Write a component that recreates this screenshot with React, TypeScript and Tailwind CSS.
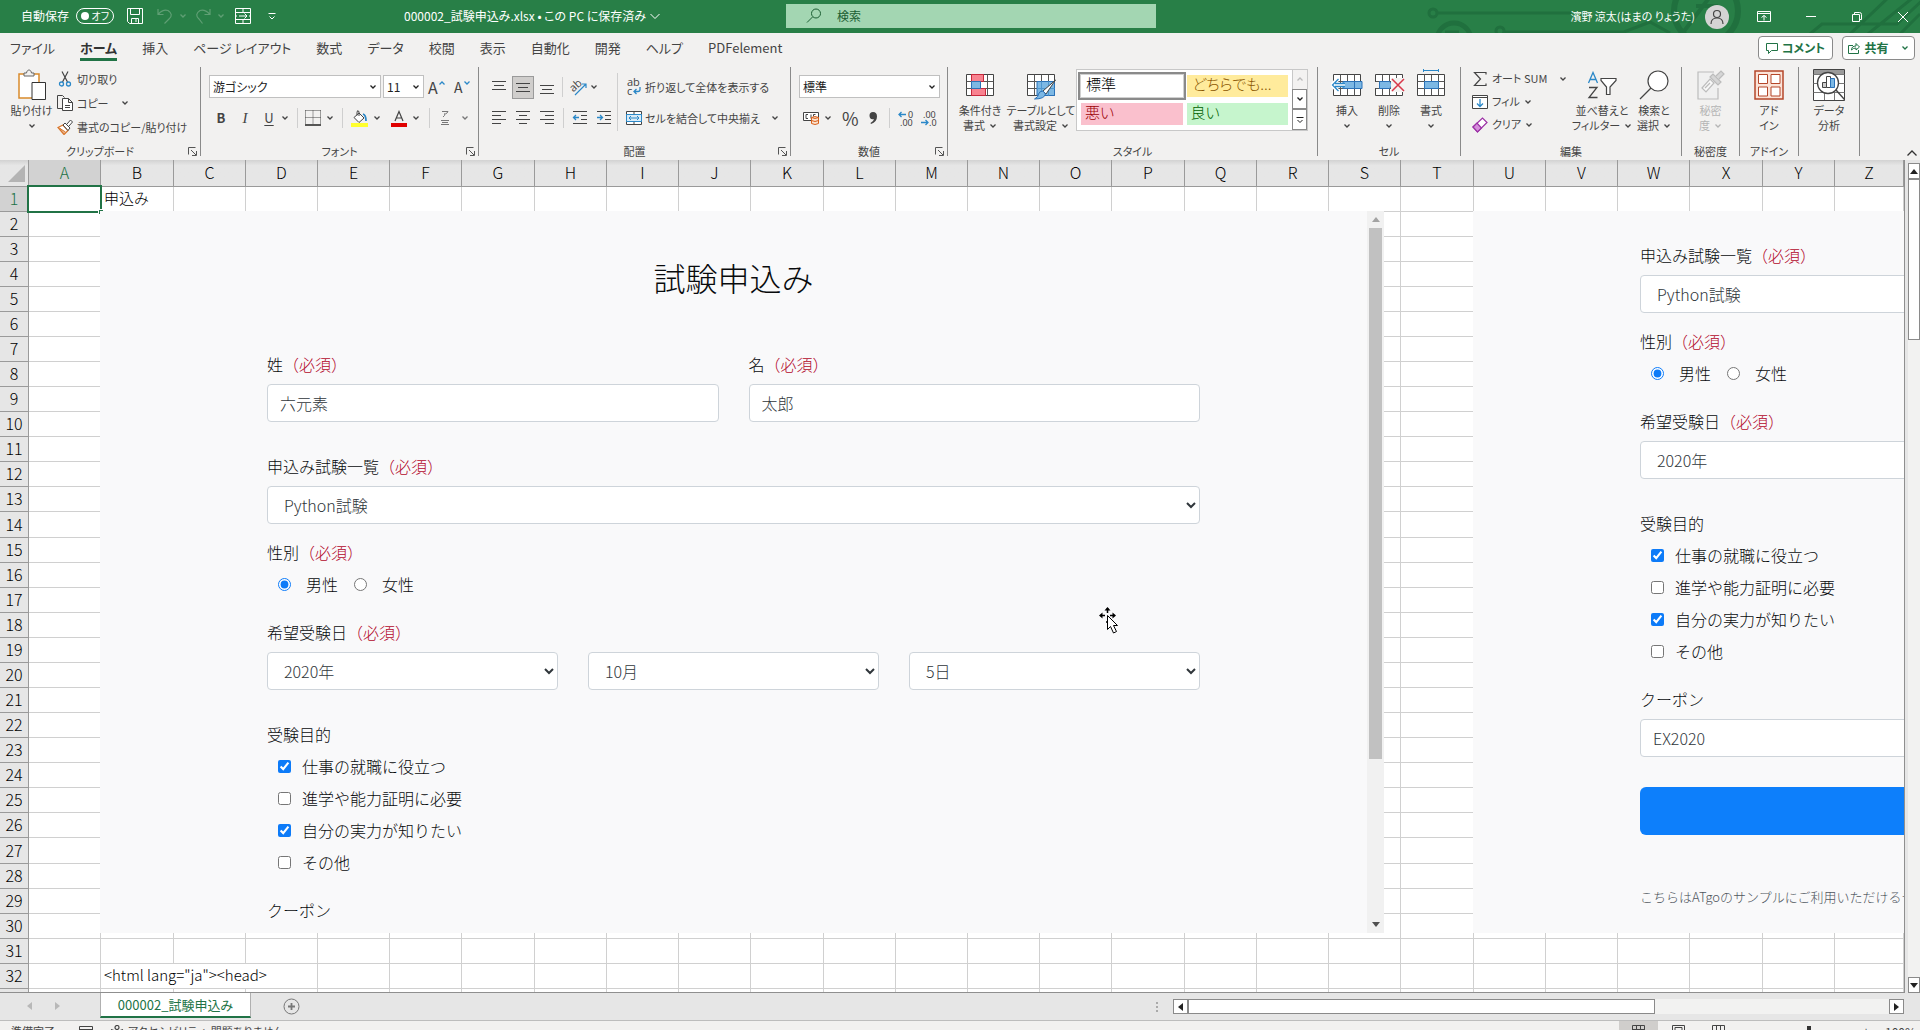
import { Fragment, useState } from "react"
import type { ReactNode } from "react"
import clsx from "clsx"

const COLUMNS = "ABCDEFGHIJKLMNOPQRSTUVWXYZ".split("")
const WIDE_COLUMNS = ["B", "G", "K", "P", "T", "X"]
const ROWS = Array.from({ length: 33 }, (_, i) => i + 1)
const TALL_ROWS = [14, 27]

const TABS = [
  "ファイル", "ホーム", "挿入", "ページ レイアウト", "数式", "データ",
  "校閲", "表示", "自動化", "開発", "ヘルプ", "PDFelement",
]

const PURPOSES = [
  { label: "仕事の就職に役立つ", checked: true },
  { label: "進学や能力証明に必要", checked: false },
  { label: "自分の実力が知りたい", checked: true },
  { label: "その他", checked: false },
]

/* ---------- small shared pieces ---------- */

function Chevron({ className = "" }: { className?: string }) {
  return (
    <svg viewBox="0 0 8 8" className={clsx("h-2 w-2 shrink-0", className)} fill="none" stroke="currentColor" strokeWidth="1.3">
      <path d="M1.5 2.5 4 5l2.5-2.5" />
    </svg>
  )
}

function Launcher() {
  return (
    <button aria-label="ダイアログを表示" className="absolute right-[3px] bottom-0">
      <svg viewBox="0 0 9 9" className="h-[9px] w-[9px]" fill="none" stroke="#555" strokeWidth="1">
        <path d="M.5 7.500V.5H7.500M3 3l5 5M8.500 4v4.500H4" />
      </svg>
    </button>
  )
}

function Group({ label, className, launcher, children }: {
  label: string
  className: string
  launcher?: boolean
  children: ReactNode
}) {
  return (
    <section className={clsx("relative flex shrink-0 flex-col border-r border-[#8a8a8a]", className)}>
      <div className="flex h-[75px] shrink-0 items-start">{children}</div>
      <div className="text-center text-[11px] leading-[18px] text-[#444]">{label}</div>
      {launcher && <Launcher />}
    </section>
  )
}

function BigButton({ icon, lines, arrow, className, disabled }: {
  icon: ReactNode
  lines: string[]
  arrow?: boolean
  className: string
  disabled?: boolean
}) {
  return (
    <button
      disabled={disabled}
      className={clsx("flex shrink-0 flex-col items-center text-[11px] leading-[15px] whitespace-nowrap", className, disabled ? "text-[#b5b5b5]" : "text-[#444]")}
    >
      <span className="grid h-9 place-items-center">{icon}</span>
      {lines.map((line, i) => (
        <span key={line} className="flex items-center gap-1">
          {line}
          {arrow && lines.length > 1 && i === lines.length - 1 && <Chevron />}
        </span>
      ))}
      {arrow && lines.length === 1 && <Chevron className="mt-1" />}
    </button>
  )
}

function Divider({ className = "h-5" }: { className?: string }) {
  return <span className={clsx("w-px shrink-0 bg-[#cfcfcf]", className)} />
}

/* ---------- icons ---------- */

function LinesIcon({ rows }: { rows: [number, number, number][] }) {
  return (
    <svg viewBox="0 0 16 16" className="h-4 w-4" stroke="#444" strokeWidth="1">
      {rows.map(([x1, x2, y]) => <path key={y} d={`M${x1} ${y}H${x2}`} />)}
    </svg>
  )
}

function IndentIcon({ out }: { out?: boolean }) {
  return (
    <svg viewBox="0 0 16 16" className="h-4 w-4" fill="none" stroke="#444">
      <path d="M1 1.500h14M9 5.500h6M9 9.500h6M1 13.500h14" />
      <path d={out ? "M7 7.500H1.500M4 5 1.500 7.500 4 10" : "M1 7.500h5.500M4 5l2.500 2.500L4 10"} stroke="#2b88c8" strokeWidth="1.300" />
    </svg>
  )
}

function GridIcon({ children }: { children?: ReactNode }) {
  return (
    <svg viewBox="0 0 32 32" className="h-8 w-8" fill="none" stroke="#555">
      <path d="M2.500 5.500h27v21h-27z" fill="#fff" stroke="#444" />
      <path d="M9.500 5.500v21M16.500 5.500v21M23.500 5.500v21M2.500 12.500h27M2.500 19.500h27" />
      {children}
    </svg>
  )
}

function PasteIcon() {
  return (
    <svg viewBox="0 0 28 32" className="h-8 w-7" fill="none">
      <path d="M1 5h20v24H1z" fill="#fff" stroke="#d98a2b" strokeWidth="1.500" />
      <path d="M6 7V4h2.500c.5-4 4.500-4 5 0H16v3z" fill="#f3f2f1" stroke="#666" />
      <path d="M14 13.500h13.500v17H14z" fill="#fff" stroke="#333" />
    </svg>
  )
}

function CutIcon() {
  return (
    <svg viewBox="0 0 16 16" className="h-4 w-4" fill="none">
      <path d="M5 .5 10.500 11M11 .5 5.500 11" stroke="#444" strokeWidth="1.200" />
      <circle cx="4.500" cy="13" r="2" stroke="#2b88c8" strokeWidth="1.300" />
      <circle cx="11.500" cy="13" r="2" stroke="#2b88c8" strokeWidth="1.300" />
    </svg>
  )
}

function CopyIcon() {
  return (
    <svg viewBox="0 0 16 16" className="h-4 w-4" fill="none" stroke="#444">
      <path d="M5 13.500H.5V.5h5l2 2" />
      <path d="M5.500 3.500h6l4 4v8h-10zM11.500 3.500v4h4M8 10.500h5M8 12.500h5" fill="#fff" />
    </svg>
  )
}

function BrushIcon() {
  return (
    <svg viewBox="0 0 16 16" className="h-4 w-4" fill="none">
      <path d="M1 8.500 6 6l5 5.500-4 4z" fill="#fff" stroke="#d9762b" strokeWidth="1.300" />
      <path d="M3 9.500 8.500 13M2 8.500l6 6" stroke="#d9762b" />
      <path d="m6 6 2-2 5 5-2 2.500zM10 5l3.500-4 2 2L12 7" fill="#fff" stroke="#444" />
    </svg>
  )
}

function MergeIcon() {
  return (
    <svg viewBox="0 0 16 16" className="h-4 w-4" fill="none" stroke="#444">
      <path d="M.5 1.500h15v13H.5zM8 1v3M8 12v3" fill="#fff" />
      <path d="M.5 4.500h15v7H.5z" fill="#d9ecf8" stroke="#2b88c8" />
      <path d="M3 8h10M5 6 3 8l2 2M11 6l2 2-2 2" stroke="#2b88c8" />
    </svg>
  )
}

function WrapIcon() {
  return (
    <svg viewBox="0 0 16 18" className="h-[18px] w-4" fill="none">
      <text x="1" y="8" fontSize="11" fill="#444" fontFamily="Open Sans, sans-serif">ab</text>
      <text x="1" y="17" fontSize="11" fill="#444" fontFamily="Open Sans, sans-serif">c</text>
      <path d="M14 9v2.500q0 2-2 2H8M10.500 11 8 13.500l2.500 2.500" stroke="#2b88c8" strokeWidth="1.300" />
    </svg>
  )
}

function OrientationIcon() {
  return (
    <svg viewBox="0 0 17 17" className="h-[17px] w-[17px]" fill="none">
      <text x="0" y="11" fontSize="11" fill="#444" fontFamily="Open Sans, sans-serif" transform="rotate(-42 5 8)">ab</text>
      <path d="M5 16 16 5M12 5h4v4" stroke="#2b88c8" strokeWidth="1.200" />
    </svg>
  )
}

function BorderIcon() {
  return (
    <svg viewBox="0 0 16 16" className="h-4 w-4" fill="none" stroke="#444">
      <path d="M.5.500h15M.5.500v14M15.500.500v14M8 .5v14M.5 7.500h15" strokeDasharray="1 1" />
      <path d="M0 15h16" stroke="#222" strokeWidth="1.500" />
    </svg>
  )
}

function FillIcon() {
  return (
    <svg viewBox="0 0 17 17" className="h-[17px] w-[17px]" fill="none">
      <path d="M3 7.500 8 3l5 5-5 4.500z" fill="#fff" stroke="#444" />
      <path d="M8 6V1.500q-2-2-2 1v3" stroke="#444" />
      <path d="M12 4q3 1 3 7" stroke="#2b88c8" strokeWidth="1.800" />
      <path d="M0 13h17v4H0z" fill="#ffff2e" />
    </svg>
  )
}

function FontColorIcon() {
  return (
    <svg viewBox="0 0 16 17" className="h-[17px] w-4" fill="none">
      <path d="M4 11 8 1.500 12 11M5.300 8h5.400" stroke="#444" strokeWidth="1.200" />
      <path d="M0 13h16v4H0z" fill="#e00000" />
    </svg>
  )
}

function PhoneticIcon() {
  return (
    <svg viewBox="0 0 12 16" className="h-4 w-3" fill="none" stroke="currentColor">
      <path d="M3 1.500h6q-1 2-2.500 2.500M6 3q0 3-2 4M2 10.500h8M3 12.500h6M2 14.500h8" />
    </svg>
  )
}

function AccountingIcon() {
  return (
    <svg viewBox="0 0 17 15" className="h-[15px] w-[17px]" fill="none" stroke="#444">
      <path d="M.5 1.500h15v8H.5z" fill="#fff" />
      <path d="M5 3.500H3v4h2M8 3.500v4M12.500 3.500h-2v2" />
      <path d="M8.500 6.500v6q3.500 2 7 0v-6q-3.500-2-7 0q3.500 2 7 0M8.500 9.500q3.500 2 7 0" fill="#fbe3d0" stroke="#d9601b" />
    </svg>
  )
}

function DecimalIcon({ less }: { less?: boolean }) {
  return (
    <svg viewBox="0 0 17 17" className="h-[17px] w-[17px]" fill="none">
      <text x={less ? 2 : 10} y="8" fontSize="9" fill="#444" fontFamily="Noto Sans, sans-serif">{less ? ".00" : "0"}</text>
      <text x={less ? 8 : 2} y="16" fontSize="9" fill="#444" fontFamily="Noto Sans, sans-serif">{less ? ".0" : ".00"}</text>
      <path d={less ? "M0 12.500h7M4.500 10 7 12.500 4.500 15" : "M8 4.500H1M3.500 2 1 4.500 3.500 7"} stroke="#2b88c8" strokeWidth="1.300" />
    </svg>
  )
}

function ConditionalIcon() {
  return (
    <GridIcon>
      <path d="M7.500 5.500h12v7h-12zM7.500 19.500h14v7h-14z" fill="#f8828f" stroke="#c8283c" />
      <path d="M7.500 12.500h9v7h-9z" fill="#7db8e4" stroke="#2b72b8" />
    </GridIcon>
  )
}

function TableStyleIcon() {
  return (
    <GridIcon>
      <path d="M12 12.500h17.500v14H12z" fill="#7db8e4" stroke="#2b72b8" />
      <path d="M16.500 12.500v14M23.500 12.500v14M12 19.500h17.500" stroke="#4f97cf" />
      <path d="M30.500 11 21 25l-3-3z" fill="#fff" stroke="#444" />
      <path d="M20.500 25q-1 5-11 5 4-2 4-5 1-3 4.500-3z" fill="#7db8e4" stroke="#2b72b8" />
    </GridIcon>
  )
}

function InsertCellsIcon() {
  return (
    <GridIcon>
      <path d="M12 12.500h19v7H12z" fill="#7db8e4" stroke="#2b72b8" />
      <path d="M23.500 12.500v7" stroke="#2b72b8" />
      <path d="M14 16H1M7 10l-6 6 6 6" stroke="#fff" strokeWidth="4" />
      <path d="M14 14.500H4M14 17.500H4M7.500 10l-6 6 6 6" stroke="#2b88c8" strokeWidth="1.300" />
    </GridIcon>
  )
}

function DeleteCellsIcon() {
  return (
    <GridIcon>
      <path d="M1 13h5v6H1z" fill="#f3f2f1" stroke="none" />
      <path d="M6.500 12.500h10l3 3.500-3 3.500h-10z" fill="#7db8e4" stroke="#2b72b8" />
      <path d="M18 9h13v14H18z" fill="#f3f2f1" stroke="none" />
      <path d="m19 10 12 12M31 10 19 22" stroke="#d8384a" strokeWidth="1.500" />
    </GridIcon>
  )
}

function FormatCellsIcon() {
  return (
    <GridIcon>
      <path d="M9.500 12.500h14v7h-14z" fill="#7db8e4" stroke="#2b72b8" />
      <path d="M8.500 1.500h15M8.500 0v3M23.500 0v3" stroke="#2b88c8" />
    </GridIcon>
  )
}

function SortFilterIcon() {
  return (
    <svg viewBox="0 0 30 28" className="h-7 w-[30px]" fill="none">
      <path d="M1.500 12 6 1.500 10.500 12M3 8.500h6" stroke="#2b88c8" strokeWidth="1.300" />
      <path d="M2 16.500h8L2 26.500h8.500" stroke="#444" strokeWidth="1.300" />
      <path d="M14 7.500h15v2l-6 6.500v7.500h-3.500V16L14 9.500z" fill="#fff" stroke="#444" strokeWidth="1.200" />
    </svg>
  )
}

function MagnifierIcon() {
  return (
    <svg viewBox="0 0 30 30" className="h-[30px] w-[30px]" fill="none" stroke="#444" strokeWidth="1.200">
      <circle cx="19" cy="11" r="10" fill="#fff" />
      <path d="M12 18 1 29" />
    </svg>
  )
}

function SensitivityIcon() {
  return (
    <svg viewBox="0 0 30 32" className="h-8 w-[30px]" fill="none" stroke="#bcbcbc" strokeWidth="1.200">
      <path d="M18 3H2v27h20V19" fill="#f0f0f0" />
      <path d="m6 19 8-9 4 4-8 9z" fill="#f8f8f8" />
      <path d="m9 19 5-5" />
      <path d="m14 8 3-3 8 8-3 3zM20 7l5-5 3 3-5 5" fill="#d6d6d6" />
    </svg>
  )
}

function AddinIcon() {
  return (
    <svg viewBox="0 0 30 30" className="h-[30px] w-[30px]" fill="#fff" stroke="#b5472a">
      <path d="M1 1h28v28H1z" fill="#fbe3d8" strokeWidth="1.500" />
      <path d="M4.500 4.500h9v9h-9zM17 4.500h9v9h-9zM4.500 17h9v9h-9zM17 17h9v9h-9z" />
    </svg>
  )
}

function AnalyzeIcon() {
  return (
    <svg viewBox="0 0 32 32" className="h-8 w-8" fill="none" stroke="#444">
      <path d="M.5.500h31v31H.5z" fill="#fff" />
      <path d="M1 1h30v4H1z" fill="#9a9a9a" stroke="none" />
      <path d="M.5 5.500h31M.5 14.500h31M.5 23.500h31M11.500 23v8M21.500 23v8" stroke="#777" />
      <circle cx="15" cy="14" r="10.500" fill="#fff" strokeWidth="1.300" />
      <path d="M9.500 13.500h4v5h-4z" fill="#ccc" />
      <path d="M13.500 7.500h4v11h-4z" fill="#fff" />
      <path d="M17.500 9.500h4v9h-4z" fill="#7db8e4" stroke="#2b72b8" />
      <path d="m23 21 9 10" strokeWidth="1.500" />
    </svg>
  )
}

/* ---------- title bar ---------- */

function CircuitArt() {
  return (
    <svg viewBox="0 0 500 33" className="pointer-events-none absolute top-0 right-0 h-[33px] w-[500px]" fill="none" stroke="#20703e" strokeWidth="3">
      <circle cx="13" cy="13" r="4" />
      <path d="M17 13h134M84 32h120l26-10 20 11" />
      <circle cx="34" cy="40" r="17" strokeWidth="5" />
      <path d="M25 32h14" />
      <circle cx="80" cy="31" r="4" />
      <circle cx="286" cy="11" r="32" strokeWidth="6" />
      <path d="m262 34 30-40M276 6h20v20" strokeWidth="4" />
      <path d="m390 34 12-10h75l30-28M430 34 470-4M448 34 500-8M480 34l20-20" />
    </svg>
  )
}

function TitleBar() {
  return (
    <header className="relative flex h-[33px] shrink-0 items-center overflow-hidden bg-[#287f47] text-xs text-white">
      <CircuitArt />
      <div className="flex w-[404px] shrink-0 items-center pb-0.5 pl-[21px]">
        <span>自動保存</span>
        <button role="switch" aria-checked="false" className="ml-[7px] flex h-4 w-[38px] items-center justify-between rounded-full border border-white px-1 text-[10px]">
          <span className="h-2 w-2 rounded-full bg-white" />
          <span>オフ</span>
        </button>
        <button aria-label="上書き保存" className="ml-[13px]">
          <svg viewBox="0 0 16 16" className="h-4 w-4" fill="none" stroke="#fff">
            <path d="M.5.500h15v15H2.500l-2-2zM3.500.500v6h9v-6M4.500 15.500v-5h7v5M9 11v3" />
          </svg>
        </button>
        <button aria-label="元に戻す" className="ml-[14px] flex items-center gap-1.5 text-[#5f9f74]">
          <svg viewBox="0 0 16 16" className="h-4 w-4" fill="none" stroke="currentColor" strokeWidth="1.200">
            <path d="M1 1v5.500h5.500M1.500 6Q6 1 11 2.500q6 4 1 8.500l-4.500 4.500" />
          </svg>
          <Chevron />
        </button>
        <button aria-label="やり直し" className="ml-2 flex items-center gap-1.5 text-[#5f9f74]">
          <svg viewBox="0 0 16 16" className="h-4 w-4" fill="none" stroke="currentColor" strokeWidth="1.200">
            <path d="M15 1v5.500H9.500M14.500 6Q10 1 5 2.500q-6 4-1 8.500l3.500 4.500" />
          </svg>
          <Chevron />
        </button>
        <button aria-label="フォーム" className="ml-2.5">
          <svg viewBox="0 0 16 16" className="h-4 w-4" fill="none" stroke="#fff">
            <path d="M.5.500h15v15H.5zM.5 4.500h15M8 .5v4M.5 11.500h15M8 11.500v4M4 8h8M9.500 5.500 12 8l-2.500 2.500M.5 8H2M14 8h1.500" />
          </svg>
        </button>
        <button aria-label="クイック アクセス ツール バーのユーザー設定" className="ml-[17px]">
          <svg viewBox="0 0 8 8" className="h-2 w-2" fill="none" stroke="#fff">
            <path d="M.5 1.500h7M1.500 4.500 4 7l2.500-2.500" />
          </svg>
        </button>
      </div>
      <button className="flex w-[382px] shrink-0 items-center gap-1 pb-0.5 whitespace-nowrap">
        000002_試験申込み.xlsx • この PC に保存済み
        <svg viewBox="0 0 10 8" className="h-2 w-2.5" fill="none" stroke="currentColor"><path d="M.5 2 5 6.500 9.500 2" /></svg>
      </button>
      <label className="mb-[2px] flex h-6 w-[370px] shrink-0 items-center bg-[#a3d6b2] pl-5 text-[#1b5e33]">
        <svg viewBox="0 0 16 16" className="h-4 w-4" fill="none" stroke="currentColor">
          <circle cx="10" cy="5.500" r="4.500" />
          <path d="M6.500 9 1 14.500" />
        </svg>
        <input aria-label="検索" placeholder="検索" className="ml-[15px] flex-1 bg-transparent outline-none placeholder:text-[#1b5e33]" />
      </label>
      <div className="relative ml-auto flex items-center pr-3">
        <span className="text-[11px] whitespace-nowrap">濱野 涼太(はまの りょうた)</span>
        <span className="ml-2.5 grid h-6 w-6 place-items-center rounded-full bg-[#d4d4d4]">
          <svg viewBox="0 0 16 16" className="h-4 w-4" fill="none" stroke="#444" strokeWidth="1.200">
            <circle cx="8" cy="5" r="3.500" />
            <path d="M2 15q0-6 6-6t6 6" />
          </svg>
        </span>
        <button aria-label="リボンの表示オプション" className="ml-7">
          <svg viewBox="0 0 14 11" className="h-[11px] w-[14px]" fill="none" stroke="#fff">
            <path d="M.5.500h13v10H.5zM.5 2.500h13M7 9.500V4.500M4.500 6.500 7 4.500l2.500 2" />
          </svg>
        </button>
        <button aria-label="最小化" className="ml-[35px]">
          <svg viewBox="0 0 10 10" className="h-2.5 w-2.5" stroke="#fff"><path d="M0 4.500h10" /></svg>
        </button>
        <button aria-label="元に戻す (縮小)" className="ml-9">
          <svg viewBox="0 0 10 10" className="h-2.5 w-2.5" fill="none" stroke="#fff">
            <path d="M.5 2.500h7v7h-7zM2.500 2V.5h5q2 0 2 2v5H8" />
          </svg>
        </button>
        <button aria-label="閉じる" className="ml-9">
          <svg viewBox="0 0 10 10" className="h-2.5 w-2.5" stroke="#fff"><path d="m0 0 10 10M10 0 0 10" /></svg>
        </button>
      </div>
    </header>
  )
}

function TabBar() {
  const [active, setActive] = useState("ホーム")
  return (
    <nav className="flex h-[34px] shrink-0 items-start justify-between bg-[#f2f1f0] pt-[3px] pr-[5px] pl-[10px]">
      <div className="flex gap-[25px]">
        {TABS.map((tab) => (
          <button
            key={tab}
            onClick={() => setActive(tab)}
            className={clsx(
              "h-[25px] border-b-3 pt-0.5 text-[13px] leading-5 whitespace-nowrap",
              tab === active ? "border-[#217346] font-bold text-[#333]" : "border-transparent text-[#444]",
            )}
          >
            {tab}
          </button>
        ))}
      </div>
      <div className="flex gap-[9px] text-xs font-bold text-[#217346]">
        <button className="flex h-6 w-[75px] items-center justify-center gap-1 rounded border border-[#8a8a8a] bg-white">
          <svg viewBox="0 0 12 12" className="h-3 w-3" fill="none" stroke="currentColor">
            <path d="M.5 1.500h11v7h-6l-3 3v-3h-2z" />
          </svg>
          コメント
        </button>
        <button className="flex h-6 w-[73px] items-center justify-center gap-1 rounded border border-[#8a8a8a] bg-white">
          <svg viewBox="0 0 12 12" className="h-3 w-3" fill="none" stroke="currentColor">
            <path d="M5 3.500H.5v8h10V8M3.500 8q0-4 4.500-4V1.500L11.500 5 8 8V6Q5 6 3.500 8z" />
          </svg>
          共有
          <Chevron className="ml-2" />
        </button>
      </div>
    </nav>
  )
}

/* ---------- ribbon ---------- */

function ClipboardGroup() {
  return (
    <Group label="クリップボード" className="w-[201px]" launcher>
      <BigButton className="w-[57px] pl-1.5" icon={<PasteIcon />} lines={["貼り付け"]} arrow />
      <div className="flex flex-col text-[11px] whitespace-nowrap text-[#444]">
        <button className="flex h-6 items-center gap-1"><CutIcon />切り取り</button>
        <button className="flex h-6 items-center gap-1"><CopyIcon />コピー<Chevron className="ml-2" /></button>
        <button className="flex h-6 items-center gap-1"><BrushIcon />書式のコピー/貼り付け</button>
      </div>
    </Group>
  )
}

function ComboBox({ id, label, value, className }: { id: string; label: string; value: string; className: string }) {
  return (
    <span className={clsx("relative flex h-[23px] shrink-0 items-center border border-[#c0c0c0] bg-white", className)}>
      <select id={id} aria-label={label} className="w-full appearance-none bg-transparent px-[3px] text-xs text-[#222] outline-none">
        <option>{value}</option>
      </select>
      <Chevron className="pointer-events-none absolute right-[3px] text-[#222]" />
    </span>
  )
}

function FontGroup() {
  return (
    <Group label="フォント" className="w-[278px]" launcher>
      <div className="flex flex-1 flex-col pt-2 pl-2 text-[#444]">
        <div className="flex items-center">
          <ComboBox id="font-name" label="フォント名" value="游ゴシック" className="w-[172px]" />
          <ComboBox id="font-size" label="フォント サイズ" value="11" className="ml-0.5 w-[41px]" />
          <button className="ml-1 flex w-[26px] items-start text-base leading-4" aria-label="フォント サイズの拡大">
            A<Chevron className="rotate-180 text-[#2b88c8]" />
          </button>
          <button className="flex items-start text-sm leading-4" aria-label="フォント サイズの縮小">
            A<Chevron className="text-[#2b88c8]" />
          </button>
        </div>
        <div className="mt-2 flex h-6 items-center">
          <button className="w-6 text-[13px] font-bold">B</button>
          <button className="w-6 font-['Liberation_Serif',serif] text-[15px] italic">I</button>
          <button className="w-6 text-[13px] underline underline-offset-2">U</button>
          <Chevron className="mr-2" />
          <Divider />
          <button aria-label="罫線" className="ml-[7px] flex items-center gap-[5px]"><BorderIcon /><Chevron /></button>
          <Divider className="mx-2 h-5" />
          <button aria-label="塗りつぶしの色" className="flex items-center gap-[5px]"><FillIcon /><Chevron /></button>
          <button aria-label="フォントの色" className="ml-2.5 flex items-center gap-[5px]"><FontColorIcon /><Chevron /></button>
          <Divider className="mx-[9px] h-5" />
          <button aria-label="ふりがなの表示/非表示" className="flex items-center gap-2.5 text-[#777]"><PhoneticIcon /><Chevron /></button>
        </div>
      </div>
    </Group>
  )
}

function AlignmentGroup() {
  return (
    <Group label="配置" className="w-[312px]" launcher>
      <div className="flex w-[138px] flex-col pt-2 pl-2.5 text-[#444]">
        <div className="flex h-6 items-center">
          <button aria-label="上揃え" className="w-[23px] pl-0.5"><LinesIcon rows={[[1, 15, 2.5], [3, 13, 6.5], [1, 15, 10.5]]} /></button>
          <button aria-label="上下中央揃え" className="grid h-[23px] w-[22px] place-items-center border border-[#9a9a9a] bg-[#d0cecc]"><LinesIcon rows={[[1, 15, 4.5], [3, 13, 8.5], [1, 15, 12.5]]} /></button>
          <button aria-label="下揃え" className="ml-[5px]"><LinesIcon rows={[[1, 15, 6.5], [3, 13, 10.5], [1, 15, 14.5]]} /></button>
          <Divider className="mx-[7px] h-5" />
          <button aria-label="方向" className="flex items-center gap-[3px]"><OrientationIcon /><Chevron /></button>
        </div>
        <div className="mt-[7px] flex h-6 items-center gap-2">
          <button aria-label="左揃え" className="pl-0.5"><LinesIcon rows={[[1, 15, 1.5], [1, 10, 5.5], [1, 15, 9.5], [1, 10, 13.5]]} /></button>
          <button aria-label="中央揃え"><LinesIcon rows={[[1, 15, 1.5], [4, 12, 5.5], [1, 15, 9.5], [4, 12, 13.5]]} /></button>
          <button aria-label="右揃え"><LinesIcon rows={[[1, 15, 1.5], [6, 15, 5.5], [1, 15, 9.5], [6, 15, 13.5]]} /></button>
          <Divider />
          <button aria-label="インデントを減らす"><IndentIcon out /></button>
          <button aria-label="インデントを増やす"><IndentIcon /></button>
        </div>
      </div>
      <Divider className="mt-1.5 h-[58px]" />
      <div className="flex flex-col pt-2 pl-2 text-[11px] whitespace-nowrap text-[#444]">
        <button className="flex h-6 items-center gap-[3px]"><WrapIcon />折り返して全体を表示する</button>
        <button className="mt-[7px] flex h-6 items-center gap-[3px]"><MergeIcon />セルを結合して中央揃え<Chevron className="ml-2" /></button>
      </div>
    </Group>
  )
}

function NumberGroup() {
  return (
    <Group label="数値" className="w-[157px]" launcher>
      <div className="flex flex-1 flex-col pt-2 pl-2 text-[#444]">
        <ComboBox id="number-format" label="表示形式" value="標準" className="w-[141px]" />
        <div className="mt-2 flex h-6 items-center">
          <button aria-label="通貨表示形式" className="ml-1 flex items-center gap-1"><AccountingIcon /><Chevron /></button>
          <button aria-label="パーセント スタイル" className="ml-2.5 text-lg leading-6">%</button>
          <button aria-label="桁区切りスタイル" className="ml-2.5">
            <svg viewBox="0 0 8 12" className="h-3 w-2" fill="#444"><path d="M4 0q4 0 4 4.500Q8 10 2 12l-.5-1Q4.500 9.500 5 7 .5 8 .5 3.500.5 0 4 0z" /></svg>
          </button>
          <Divider className="mr-2 ml-3 h-5" />
          <button aria-label="小数点以下の表示桁数を増やす"><DecimalIcon /></button>
          <button aria-label="小数点以下の表示桁数を減らす" className="ml-1.5"><DecimalIcon less /></button>
        </div>
      </div>
    </Group>
  )
}

function StyleGroup() {
  return (
    <Group label="スタイル" className="w-[370px]">
      <BigButton className="ml-1 w-[56px]" icon={<ConditionalIcon />} lines={["条件付き", "書式"]} arrow />
      <BigButton className="mr-0.5 w-[66px]" icon={<TableStyleIcon />} lines={["テーブルとして", "書式設定"]} arrow />
      <div className="mt-0.5 flex h-[62px] w-[232px] border border-[#c8c8c8] bg-white">
        <div className="grid flex-1 grid-cols-2 gap-x-1 gap-y-1.5 px-1 py-[5px] text-[15px] leading-[18px] font-light">
          <button className="-m-[3px] border-2 border-[#8a8a8a] pb-1 pl-1.5 text-left text-black outline outline-1 -outline-offset-3 outline-[#d0d0d0]">標準</button>
          <button className="bg-[#ffeb9c] pb-1 pl-1.5 text-left whitespace-nowrap text-[#8a5600]">どちらでも...</button>
          <button className="bg-[#fac0cd] pb-1 pl-1 text-left text-[#9c0006]">悪い</button>
          <button className="bg-[#c6f5cd] pb-1 pl-1 text-left text-[#006100]">良い</button>
        </div>
        <div className="flex w-[15px] flex-col">
          <button aria-label="前の行" className="grid flex-1 place-items-center border-l border-[#c8c8c8] bg-[#f3f2f1] text-[#bbb]"><Chevron className="rotate-180" /></button>
          <button aria-label="次の行" className="grid flex-1 place-items-center border border-[#8a8a8a] text-[#222]"><Chevron /></button>
          <button aria-label="その他" className="grid flex-1 place-items-center border border-[#8a8a8a] text-[#222]">
            <svg viewBox="0 0 8 8" className="h-2 w-2" fill="none" stroke="currentColor"><path d="M.5 1.500h7M1.500 4 4 6.500 6.500 4" /></svg>
          </button>
        </div>
      </div>
    </Group>
  )
}

function CellGroup() {
  return (
    <Group label="セル" className="w-[143px]">
      <BigButton className="ml-2 w-[42px]" icon={<InsertCellsIcon />} lines={["挿入"]} arrow />
      <BigButton className="w-[42px]" icon={<DeleteCellsIcon />} lines={["削除"]} arrow />
      <BigButton className="w-[42px]" icon={<FormatCellsIcon />} lines={["書式"]} arrow />
    </Group>
  )
}

function EditGroup() {
  return (
    <Group label="編集" className="w-[221px]">
      <div className="flex w-[110px] flex-col pl-[11px] text-[11px] whitespace-nowrap text-[#444]">
        <button className="flex h-[23px] items-center gap-1">
          <svg viewBox="0 0 16 16" className="h-4 w-4" fill="none" stroke="#444" strokeWidth="1.200"><path d="M14 3.500V1.500H2.500L8.500 8l-6 6.500H14v-2" /></svg>
          オート SUM<Chevron className="ml-2" />
        </button>
        <button className="flex h-[23px] items-center gap-1">
          <svg viewBox="0 0 16 16" className="h-4 w-4" fill="none" stroke="#444"><path d="M.5 1.500h15v13H.5zM.5 3.500h15" fill="#fff" /><path d="M8 5v7.500M5 9.500l3 3 3-3" stroke="#2b88c8" strokeWidth="1.300" /></svg>
          フィル<Chevron />
        </button>
        <button className="flex h-[23px] items-center gap-1">
          <svg viewBox="0 0 16 16" className="h-4 w-4" fill="none" stroke="#9b2fa5" strokeWidth="1.200"><path d="m1 10 9.500-9L15 5.500 5.500 15z" fill="#fff" /><path d="m1 10 4-4L9.500 11l-4 4z" fill="#d58edb" /></svg>
          クリア<Chevron />
        </button>
      </div>
      <BigButton className="w-[62px]" icon={<SortFilterIcon />} lines={["並べ替えと", "フィルター"]} arrow />
      <BigButton className="w-[42px]" icon={<MagnifierIcon />} lines={["検索と", "選択"]} arrow />
    </Group>
  )
}

function Ribbon() {
  return (
    <div className="flex h-[93px] shrink-0 bg-[#f2f1f0] pb-1">
      <ClipboardGroup />
      <FontGroup />
      <AlignmentGroup />
      <NumberGroup />
      <StyleGroup />
      <CellGroup />
      <EditGroup />
      <Group label="秘密度" className="w-[58px]">
        <BigButton className="w-full" icon={<SensitivityIcon />} lines={["秘密", "度"]} arrow disabled />
      </Group>
      <Group label="アドイン" className="w-[59px]">
        <BigButton className="w-full" icon={<AddinIcon />} lines={["アド", "イン"]} />
      </Group>
      <Group label="" className="w-[61px]">
        <BigButton className="w-full" icon={<AnalyzeIcon />} lines={["データ", "分析"]} />
      </Group>
      <button aria-label="リボンを折りたたむ" className="mt-auto ml-auto pr-[3px] text-[#333]">
        <svg viewBox="0 0 10 6" className="h-1.5 w-2.5" fill="none" stroke="currentColor" strokeWidth="1.300"><path d="M.5 5.500 5 1l4.500 4.500" /></svg>
      </button>
    </div>
  )
}

/* ---------- application form shown as objects on the sheet ---------- */

function Required() {
  return <span className="text-[#b3082b]">（必須）</span>
}

function TextField({ id, label, value, required }: { id: string; label: string; value: string; required?: boolean }) {
  return (
    <div className="flex flex-1 flex-col gap-2">
      <label htmlFor={id}>{label}{required && <Required />}</label>
      <input id={id} defaultValue={value} className="h-[38px] rounded border border-[#ced4da] bg-white px-3 text-[#30363b]" />
    </div>
  )
}

function SelectBox({ id, value, label }: { id: string; value: string; label?: string }) {
  return (
    <select id={id} aria-label={label} className="h-[38px] w-full min-w-0 rounded border border-[#ced4da] bg-white px-3 text-[#30363b]">
      <option>{value}</option>
    </select>
  )
}

function ExamFields({ prefix }: { prefix: string }) {
  return (
    <>
      <div className="flex flex-col gap-2">
        <label htmlFor={`${prefix}-exam`}>申込み試験一覧<Required /></label>
        <SelectBox id={`${prefix}-exam`} value="Python試験" />
      </div>
      <fieldset className="mt-4">
        <legend>性別<Required /></legend>
        <div className="mt-2 flex items-center pl-[11px]">
          {["男性", "女性"].map((sex, i) => (
            <label key={sex} className="mr-4 flex items-center gap-[15px]">
              <input type="radio" name={`${prefix}-sex`} defaultChecked={i === 0} className="h-[13px] w-[13px] accent-[#0d7bf8]" />
              {sex}
            </label>
          ))}
        </div>
      </fieldset>
      <div className="mt-6 flex flex-col gap-2">
        <label htmlFor={`${prefix}-year`}>希望受験日<Required /></label>
        <div className="flex gap-[30px]">
          <SelectBox id={`${prefix}-year`} value="2020年" />
          <SelectBox id={`${prefix}-month`} value="10月" label="月" />
          <SelectBox id={`${prefix}-day`} value="5日" label="日" />
        </div>
      </div>
      <fieldset className="mt-8">
        <legend>受験目的</legend>
        <div className="mt-2 flex flex-col gap-2 pl-[11px]">
          {PURPOSES.map((p) => (
            <label key={p.label} className="flex items-center gap-[11px]">
              <input type="checkbox" defaultChecked={p.checked} className="h-[13px] w-[13px] accent-[#0d7bf8]" />
              {p.label}
            </label>
          ))}
        </div>
      </fieldset>
    </>
  )
}

function FormTop() {
  return (
    <div className="absolute top-[51px] left-[100px] flex h-[722px] w-[1284px] overflow-hidden bg-[#f9f9fa] text-base leading-6 font-light text-[#080a0c]">
      <div className="flex-1 px-[167px] pt-[47px]">
        <h1 className="mb-14 text-center text-[32px] leading-[38px]">試験申込み</h1>
        <div className="mb-8 flex gap-[30px]">
          <TextField id="last-name" label="姓" value="六元素" required />
          <TextField id="first-name" label="名" value="太郎" required />
        </div>
        <ExamFields prefix="top" />
        <p className="mt-6">クーポン</p>
      </div>
      <div className="flex w-[17px] flex-col items-center bg-[#f1f1f1] py-1.5">
        <svg viewBox="0 0 8 5" className="h-[5px] w-2 fill-[#a3a3a3]"><path d="M0 5 4 0l4 5z" /></svg>
        <div className="mt-[6px] h-[531px] w-[13px] bg-[#c1c1c1]" />
        <svg viewBox="0 0 8 5" className="mt-auto h-[5px] w-2 fill-[#505050]"><path d="M0 0h8L4 5z" /></svg>
      </div>
    </div>
  )
}

function FormBottom() {
  return (
    <div className="absolute top-[51px] left-[1473px] h-[722px] w-[1284px] bg-[#f9f9fa] px-[167px] pt-8 text-base leading-6 font-light text-[#080a0c]">
      <ExamFields prefix="bottom" />
      <div className="mt-6 flex">
        <TextField id="coupon" label="クーポン" value="EX2020" />
      </div>
      <button aria-label="申込み" className="mt-[30px] h-12 w-full rounded-md bg-[#0d7ffb]" />
      <p className="mt-[45px] text-[13px] whitespace-nowrap text-[#50575e]">こちらはATgoのサンプルにご利用いただけるデモサイトです。</p>
    </div>
  )
}

/* ---------- sheet ---------- */

function cellsOf(row: number) {
  if (row !== 32) {
    return COLUMNS.map((c) => (
      <td key={c} className="relative border-r border-b border-[#d0d0d0] p-0 pb-0.5 pl-[3px] whitespace-nowrap">
        {row === 1 && c === "A" && (
          <span className="absolute -top-0.5 -right-0.5 -bottom-0.5 -left-0.5 border-2 border-[#217346]">
            <span className="absolute -right-[3px] -bottom-[3px] h-[5px] w-[5px] border-t border-l border-white bg-[#217346]" />
          </span>
        )}
        {row === 1 && c === "B" && "申込み"}
      </td>
    ))
  }
  return (
    <Fragment>
      <td className="border-r border-b border-[#d0d0d0]" />
      <td colSpan={3} className="border-r border-b border-[#d0d0d0] p-0 pb-0.5 pl-[3px]">{'<html lang="ja"><head>'}</td>
      {COLUMNS.slice(4).map((c) => <td key={c} className="border-r border-b border-[#d0d0d0]" />)}
    </Fragment>
  )
}

function Sheet() {
  return (
    <div className="relative min-w-0 flex-1 overflow-hidden border-b border-[#8f8f8f]">
      <table className="w-full table-fixed border-separate border-spacing-0 bg-white text-[15px] leading-5 font-light text-black">
        <colgroup>
          <col className="w-[29px]" />
          {COLUMNS.map((c) => (
            <col key={c} className={c === "Z" ? "" : WIDE_COLUMNS.includes(c) ? "w-[73px]" : "w-[72px]"} />
          ))}
        </colgroup>
        <thead>
          <tr className="h-[27px] bg-[#e6e6e6] bg-linear-to-b from-[#d2d2d2] to-[#e6e6e6] to-20% text-base">
            <th className="border-r border-b border-[#9a9a9a] p-0">
              <svg viewBox="0 0 28 26" className="block h-[26px] w-7"><path d="M25 5v17H8z" fill="#b4b4b4" /></svg>
            </th>
            {COLUMNS.map((c) => (
              <th
                key={c}
                scope="col"
                className={clsx("border-r border-b border-[#9a9a9a] p-0 pb-0.5 leading-5 font-light", c === "A" ? "bg-[#d2d2d2] text-[#217346]" : "text-black")}
              >
                {c}
              </th>
            ))}
          </tr>
        </thead>
        <tbody>
          {ROWS.map((r) => (
            <tr key={r} className={TALL_ROWS.includes(r) ? "h-[26px]" : "h-[25px]"}>
              <th
                scope="row"
                className={clsx("border-r border-b border-[#9a9a9a] p-0 pb-0.5 text-base leading-5 font-light", r === 1 ? "bg-[#d2d2d2] text-[#217346]" : "bg-[#e6e6e6] text-black")}
              >
                {r}
              </th>
              {cellsOf(r)}
            </tr>
          ))}
        </tbody>
      </table>
      <FormTop />
      <FormBottom />
      <svg viewBox="0 0 20 28" className="pointer-events-none absolute top-[446px] left-[1099px] h-7 w-5" fill="none" stroke="#000">
        <path d="M8.500 7V2M2 9.500h4M11 9.500h4M7 16h1" strokeWidth="1.500" />
        <path d="M5.500 4.500 8.500 1l3 3.500zM3.500 6.500 0 9.500l3.500 3zM13.500 6.500l3.500 3-3.500 3z" fill="#000" stroke="none" />
        <path d="M8.500 9.500v14l3-3 3 6.500 3-1.500-3-6h4z" fill="#fff" />
      </svg>
    </div>
  )
}

function SheetScroll() {
  return (
    <div className="flex w-4 shrink-0 flex-col border-l border-[#8f8f8f] bg-[#e6e6e6] pt-[3px] pl-[3px]">
      <button aria-label="上へ" className="grid h-4 place-items-center border border-[#8a8a8a] bg-white">
        <svg viewBox="0 0 8 5" className="h-[5px] w-2 fill-[#222]"><path d="M0 5 4 0l4 5z" /></svg>
      </button>
      <div className="flex-1 bg-[#f2f2f1]">
        <div className="h-[161px] border border-[#8a8a8a] bg-white" />
      </div>
      <button aria-label="下へ" className="grid h-4 place-items-center border border-[#8a8a8a] bg-white">
        <svg viewBox="0 0 8 5" className="h-[5px] w-2 fill-[#222]"><path d="M0 0h8L4 5z" /></svg>
      </button>
    </div>
  )
}

function SheetTabs() {
  return (
    <div className="flex h-7 shrink-0 items-start border-b border-[#bdbdbd] bg-[#e6e6e6]">
      <div className="flex h-[25px] w-[100px] items-center gap-[23px] pl-[27px]">
        <svg viewBox="0 0 5 8" className="h-2 w-[5px] fill-[#b8b8b8]"><path d="M5 0v8L0 4z" /></svg>
        <svg viewBox="0 0 5 8" className="h-2 w-[5px] fill-[#b8b8b8]"><path d="M0 0v8l5-4z" /></svg>
      </div>
      <button className="h-[25px] w-[151px] border-x border-b-2 border-x-[#b0b0b0] border-b-[#217346] bg-white text-[13px] text-[#217346]">
        000002_試験申込み
      </button>
      <button aria-label="新しいシート" className="mt-[5px] ml-8">
        <svg viewBox="0 0 17 17" className="h-[17px] w-[17px]" fill="none" stroke="#777">
          <circle cx="8.500" cy="8.500" r="7.500" />
          <path d="M8.500 5v7M5 8.500h7" strokeWidth="1.800" />
        </svg>
      </button>
      <div className="mt-1.5 ml-auto flex h-[15px] w-[764px] items-stretch pr-4">
        <span className="mr-4 flex flex-col justify-center gap-0.5">
          {[0, 1, 2].map((i) => <span key={i} className="h-0.5 w-0.5 bg-[#aaa]" />)}
        </span>
        <button aria-label="左へ" className="-ml-px grid w-[15px] place-items-center border border-[#8a8a8a] bg-white">
          <svg viewBox="0 0 5 8" className="h-2 w-[5px] fill-[#222]"><path d="M5 0v8L0 4z" /></svg>
        </button>
        <div className="flex-1 bg-[#f2f2f1]">
          <div className="h-full w-[467px] border border-[#8a8a8a] bg-white" />
        </div>
        <button aria-label="右へ" className="grid w-[15px] place-items-center border border-[#8a8a8a] bg-white">
          <svg viewBox="0 0 5 8" className="h-2 w-[5px] fill-[#222]"><path d="M0 0v8l5-4z" /></svg>
        </button>
      </div>
    </div>
  )
}

function StatusBar() {
  return (
    <footer className="flex h-[21px] shrink-0 items-center bg-[#f2f1f0] text-[11px] leading-[19px] whitespace-nowrap text-[#444]">
      <span className="ml-[11px] w-[46px]">準備完了</span>
      <svg viewBox="0 0 14 12" className="ml-[22px] h-3 w-3.5" fill="none" stroke="#444"><path d="M.5.500h13v11H.5zM.5 3.500h13M3 6h3M8 6h3M3 9h3" /></svg>
      <svg viewBox="0 0 14 14" className="mr-1 ml-[17px] h-3.5 w-3.5" fill="none" stroke="#444" strokeWidth="1.200">
        <circle cx="7" cy="2.500" r="2" />
        <path d="M1 4.500 5 6v3l-2 4.500M13 4.500 9 6v3l2 4.500M5 6h4M7 9l-2 4" />
      </svg>
      <span>アクセシビリティ: 問題ありません</span>
      <div className="ml-auto flex h-full items-center">
        <button aria-label="標準" className="grid h-full w-[39px] place-items-center bg-[#d0cecc]">
          <svg viewBox="0 0 13 13" className="h-[13px] w-[13px]" fill="none" stroke="#444"><path d="M.5.500h12v12H.5zM.5 4.500h12M.5 8.500h12M4.500.500v12M8.500.500v12" /></svg>
        </button>
        <button aria-label="ページ レイアウト" className="ml-px grid h-full w-[39px] place-items-center">
          <svg viewBox="0 0 13 13" className="h-[13px] w-[13px]" fill="none" stroke="#444"><path d="M.5.500h12v12H.5zM3 2.500h7v8H3zM5 5.500h3M5 7.500h3" /></svg>
        </button>
        <button aria-label="改ページ プレビュー" className="ml-px grid h-full w-[39px] place-items-center">
          <svg viewBox="0 0 13 13" className="h-[13px] w-[13px]" fill="none" stroke="#444"><path d="M.5.500h12v12H.5zM4.500.500v8M8.500.500v8M.5 8.500h12" /></svg>
        </button>
        <span className="ml-[69px] h-3 w-1 bg-[#333]" />
        <span className="ml-[52px] w-2">+</span>
        <span className="ml-3.5 w-[35px] text-xs leading-[19px]">100%</span>
      </div>
    </footer>
  )
}

export default function App() {
  return (
    <div className="h-screen overflow-hidden bg-[#f2f1f0] font-['Noto_Sans_CJK_JP',sans-serif]">
      {/* the window reaches a little below the visible area */}
      <div className="flex h-[calc(100vh+12px)] flex-col">
        <div className="flex shrink-0 flex-col [font-feature-settings:'palt']">
          <TitleBar />
          <TabBar />
          <Ribbon />
        </div>
        <main className="flex min-h-0 flex-1">
          <Sheet />
          <SheetScroll />
        </main>
        <div className="flex shrink-0 flex-col [font-feature-settings:'palt']">
          <SheetTabs />
          <StatusBar />
        </div>
      </div>
    </div>
  )
}
